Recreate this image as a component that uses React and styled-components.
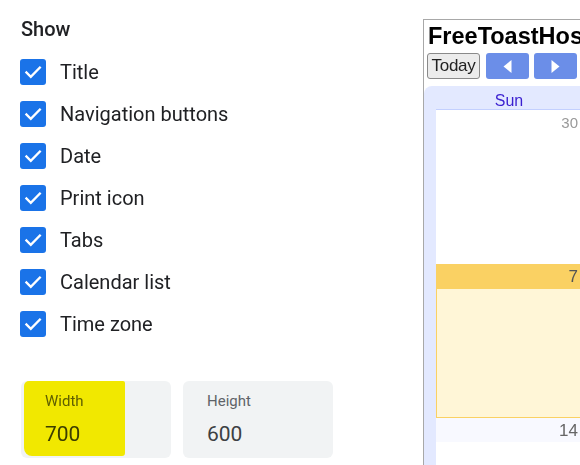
import styled, { createGlobalStyle } from "styled-components"

const GlobalStyle = createGlobalStyle`
  html, body {
    margin: 0;
    padding: 0;
    background: #ffffff;
  }
  body {
    width: 580px;
    height: 465px;
    overflow: hidden;
    font-family: Roboto, "Liberation Sans", sans-serif;
  }
`

const options = [
  "Title",
  "Navigation buttons",
  "Date",
  "Print icon",
  "Tabs",
  "Calendar list",
  "Time zone",
]

export default function App() {
  return (
    <>
      <GlobalStyle />
      <Page>
        <Settings>
          <Heading>Show</Heading>
          <OptionList>
            {options.map((o) => (
              <Option key={o}>
                <Check>
                  <svg width="26" height="26" viewBox="0 0 26 26">
                    <path d="M6.5 13.5 L10.8 17.8 L19.8 8.6" fill="none" stroke="#fff" strokeWidth="2.4" strokeLinecap="square" />
                  </svg>
                </Check>
                <OptionLabel>{o}</OptionLabel>
              </Option>
            ))}
          </OptionList>
          <SizeRow>
            <SizeField>
              <Highlight />
              <FieldLabel>Width</FieldLabel>
              <FieldValue>700</FieldValue>
            </SizeField>
            <SizeField>
              <FieldLabel>Height</FieldLabel>
              <FieldValue>600</FieldValue>
            </SizeField>
          </SizeRow>
        </Settings>

        <Calendar>
          <CalTitle>FreeToastHost</CalTitle>
          <NavRow>
            <TodayBtn>Today</TodayBtn>
            <ArrowBtn>
              <svg width="9" height="13" viewBox="0 0 9 13"><path d="M8.5 0 L0.5 6.5 L8.5 13 Z" fill="#fff" /></svg>
            </ArrowBtn>
            <ArrowBtn>
              <svg width="9" height="13" viewBox="0 0 9 13"><path d="M0.5 0 L8.5 6.5 L0.5 13 Z" fill="#fff" /></svg>
            </ArrowBtn>
          </NavRow>
          <Grid>
            <DayHead>Sun</DayHead>
            <Week>
              <DateHead>30</DateHead>
              <DayBody />
            </Week>
            <Week>
              <DateHead $today>7</DateHead>
              <DayBody $today />
            </Week>
            <Week>
              <DateHead $shade>14</DateHead>
              <DayBody />
            </Week>
          </Grid>
        </Calendar>
      </Page>
    </>
  )
}

const Page = styled.div`
  display: flex;
  width: 580px;
  height: 465px;
  overflow: hidden;
`

const Settings = styled.div`
  width: 423px;
  flex-shrink: 0;
  padding: 18px 0 0 20px;
  box-sizing: border-box;
`

const Heading = styled.div`
  font-size: 20px;
  line-height: 22px;
  font-weight: 500;
  color: #202124;
  padding-left: 1px;
`

const OptionList = styled.div`
  display: flex;
  flex-direction: column;
  gap: 16px;
  margin-top: 19px;
`

const Option = styled.div`
  display: flex;
  align-items: center;
  gap: 14px;
  height: 26px;
`

const Check = styled.div`
  width: 26px;
  height: 26px;
  border-radius: 3px;
  background: #1a73e8;
  display: flex;
`

const OptionLabel = styled.span`
  font-size: 20px;
  color: #202124;
`

const SizeRow = styled.div`
  display: flex;
  gap: 12px;
  margin-top: 44px;
  padding-left: 1px;
`

const SizeField = styled.div`
  position: relative;
  width: 150px;
  height: 77px;
  background: #f1f3f4;
  border-radius: 6px;
  padding: 11px 0 0 24px;
  box-sizing: border-box;
`

const Highlight = styled.span`
  position: absolute;
  left: 3px;
  top: 0;
  width: 101px;
  height: 75px;
  background: #fff400;
  mix-blend-mode: multiply;
  border-radius: 5px 2px 3px 8px;
`

const FieldLabel = styled.div`
  font-size: 15px;
  line-height: 18px;
  color: #5f6368;
`

const FieldValue = styled.div`
  font-size: 21px;
  line-height: 24px;
  color: #3c4043;
  margin-top: 12px;
`

const Calendar = styled.div`
  margin-top: 19px;
  width: 320px;
  flex-shrink: 0;
  border-top: 1px solid #a8a8a8;
  border-left: 1px solid #a8a8a8;
  font-family: "Liberation Sans", Arial, sans-serif;
`

const CalTitle = styled.div`
  font-size: 23.5px;
  font-weight: bold;
  color: #000;
  white-space: nowrap;
  padding: 3px 0 0 4px;
  height: 26px;
  line-height: 26px;
`

const NavRow = styled.div`
  display: flex;
  gap: 5px;
  padding: 4px 0 0 3px;
`

const TodayBtn = styled.div`
  width: 53px;
  height: 26px;
  box-sizing: border-box;
  border: 1px solid #8a8a8a;
  border-radius: 3px;
  background: #ececec;
  font-size: 17px;
  line-height: 24px;
  text-align: center;
  color: #222;
  margin-right: 1px;
  letter-spacing: -0.3px;
`

const ArrowBtn = styled.div`
  width: 43px;
  height: 26px;
  border-radius: 3px;
  background: #6b8ee8;
  display: flex;
  align-items: center;
  justify-content: center;
`

const Grid = styled.div`
  margin-top: 7px;
  background: #e3e9ff;
  border-top-left-radius: 8px;
  padding-left: 12px;
  height: 400px;
`

const DayHead = styled.div`
  width: 146px;
  height: 23px;
  border-bottom: 1px solid #c3d0ff;
  font-size: 16px;
  color: #3a1fd0;
  text-align: center;
  line-height: 30px;
  overflow: hidden;
`

const Week = styled.div`
  width: 146px;
  background: #fff;
`

const DateHead = styled.div`
  height: ${(p) => (p.$today ? "25px" : "24px")};
  background: ${(p) => (p.$today ? "#fad163" : p.$shade ? "#f8f9ff" : "#fff")};
  color: ${(p) => (p.$today ? "#555" : p.$shade ? "#666" : "#999")};
  font-size: ${(p) => (p.$today || p.$shade ? "17px" : "15px")};
  text-align: right;
  padding-right: 4px;
  line-height: 25px;
`

const DayBody = styled.div`
  height: ${(p) => (p.$today ? "128px" : "130px")};
  background: ${(p) => (p.$today ? "#fff6d7" : "#fff")};
  border: ${(p) => (p.$today ? "1px solid #fad163" : "none")};
  border-top: none;
`
